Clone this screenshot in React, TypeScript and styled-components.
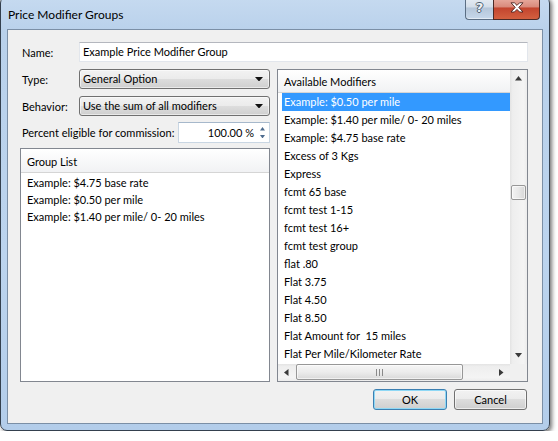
import React from "react";
import styled, { createGlobalStyle } from "styled-components";

const GlobalStyle = createGlobalStyle`
  *, *::before, *::after { box-sizing: border-box; }
  html, body { margin: 0; padding: 0; background: #ffffff; }
  body {
    font-family: "Segoe UI", Lato, "Noto Sans", sans-serif;
    font-size: 11px;
    color: #000;
  }
`;

const availableModifiers = [
  "Example: $0.50 per mile",
  "Example: $1.40 per mile/ 0- 20 miles",
  "Example: $4.75 base rate",
  "Excess of 3 Kgs",
  "Express",
  "fcmt 65 base",
  "fcmt test 1-15",
  "fcmt test 16+",
  "fcmt test group",
  "flat .80",
  "Flat 3.75",
  "Flat 4.50",
  "Flat 8.50",
  "Flat Amount for  15 miles",
  "Flat Per Mile/Kilometer Rate",
];

const groupList = [
  "Example: $4.75 base rate",
  "Example: $0.50 per mile",
  "Example: $1.40 per mile/ 0- 20 miles",
];

const Window = styled.div`
  width: 550px;
  height: 435px;
  margin-top: -4px;
  border: 1px solid #34404e;
  border-radius: 7px;
  background: linear-gradient(180deg, #c6daf0 0%, #b9d1eb 8%, #bcd4ee 60%, #b3cdea 100%);
  box-shadow: 2px 2px 4px rgba(0, 0, 0, 0.55);
  padding: 0 6px 6px 6px;
  display: flex;
  flex-direction: column;
`;

const Caption = styled.div`
  height: 32px;
  display: flex;
  align-items: flex-start;
  justify-content: space-between;
`;

const Title = styled.div`
  padding: 10px 0 0 1px;
  font-size: 12px;
  line-height: 16px;
`;

const CaptionButtons = styled.div`
  display: flex;
  margin-right: 3px;
`;

const HelpButton = styled.div`
  width: 28px;
  height: 23px;
  border: 1px solid #5b6e84;
  border-top: none;
  border-right: none;
  border-radius: 0 0 0 4px;
  background: linear-gradient(180deg, #e8eef5 0%, #d4dee9 45%, #b5c6d9 50%, #c7d8eb 100%);
  box-shadow: inset 0 -1px 0 rgba(255, 255, 255, 0.5);
  display: flex;
  justify-content: center;
  padding-top: 3px;
  font-family: "DejaVu Sans", sans-serif;
  font-weight: bold;
  font-size: 13px;
  line-height: 16px;
  color: #eef2f6;
  text-shadow: -1px 0 #4c5d70, 1px 0 #4c5d70, 0 -1px #4c5d70, 0 1px #4c5d70;
`;

const CloseButton = styled.div`
  width: 47px;
  height: 23px;
  border: 1px solid #4b2a26;
  border-top: none;
  border-radius: 0 0 4px 0;
  background: linear-gradient(180deg, #ebb2a6 0%, #d98a7b 45%, #c3442e 50%, #d3603f 100%);
  display: flex;
  justify-content: center;
  padding-top: 5px;
`;

const Client = styled.div`
  flex: 1;
  border: 1px solid #7b8fa6;
  background: #f0f0f0;
  padding: 12px 14px 0 12px;
  display: flex;
  flex-direction: column;
`;

const FieldRow = styled.div<{ $mb?: number; $h?: number }>`
  display: flex;
  align-items: center;
  height: ${(p) => p.$h ?? 20}px;
  margin-bottom: ${(p) => p.$mb ?? 0}px;
`;

const FieldLabel = styled.div<{ $auto?: boolean }>`
  width: ${(p) => (p.$auto ? "auto" : "59px")};
  padding-left: 2px;
  flex-shrink: 0;
`;

const TextInput = styled.div`
  flex: 1;
  height: 20px;
  background: #fff;
  border: 1px solid #e2e6ec;
  border-top-color: #b4b7be;
  padding-left: 3px;
  line-height: 18px;
`;

const Combo = styled.div`
  flex: 1;
  height: 20px;
  border: 1px solid #707070;
  border-radius: 3px;
  background: linear-gradient(180deg, #f2f2f2 0%, #ebebeb 50%, #dddddd 50%, #cfcfcf 100%);
  box-shadow: inset 0 0 0 1px rgba(255, 255, 255, 0.55);
  display: flex;
  align-items: center;
  justify-content: space-between;
  padding: 0 6px 0 3px;
  line-height: 18px;
`;

const SpinBox = styled.div`
  margin-left: auto;
  width: 92px;
  height: 21px;
  background: #fff;
  border: 1px solid #c9d6e3;
  border-top-color: #a6b8cb;
  display: flex;
  align-items: center;
`;

const SpinValue = styled.div`
  flex: 1;
  text-align: right;
  padding-right: 2px;
`;

const SpinArrows = styled.div`
  width: 13px;
  display: flex;
  flex-direction: column;
  align-items: center;
  gap: 4px;
`;

const MainGrid = styled.div`
  display: grid;
  grid-template-columns: 250px 1fr;
  column-gap: 7px;
  height: 313px;
`;

const LeftColumn = styled.div`
  display: flex;
  flex-direction: column;
`;

const ListFrame = styled.div`
  flex: 1;
  border: 1px solid #828790;
  background: #fff;
  display: flex;
  flex-direction: column;
  overflow: hidden;
`;

const ModifiersFrame = styled.div`
  border: 1px solid #828790;
  background: #fff;
  display: grid;
  grid-template-columns: 1fr 17px;
  grid-template-rows: 1fr 17px;
  overflow: hidden;
`;

const ListHeader = styled.div<{ $h: number; $pt: number }>`
  height: ${(p) => p.$h}px;
  flex-shrink: 0;
  border-bottom: 1px solid #d5d5d5;
  background: linear-gradient(180deg, #ffffff 0%, #f1f2f4 100%);
  padding: ${(p) => p.$pt}px 0 0 6px;
  line-height: 16px;
`;

const ModifierPane = styled.div`
  overflow: hidden;
`;

const ModifierRow = styled.div<{ $selected?: boolean }>`
  height: 18px;
  line-height: 18px;
  margin-left: 4px;
  padding-left: 2px;
  white-space: pre;
  background: ${(p) => (p.$selected ? "#3399ff" : "transparent")};
  color: ${(p) => (p.$selected ? "#ffffff" : "#000000")};
`;

const GroupRows = styled.div`
  padding-top: 1px;
`;

const GroupRow = styled.div`
  height: 17px;
  line-height: 17px;
  padding-left: 6px;
  white-space: pre;
`;

const VScroll = styled.div`
  display: flex;
  flex-direction: column;
  background: linear-gradient(90deg, #e3e3e3 0%, #eeeeee 15%, #f4f4f4 80%, #ececec 100%);
`;

const HScroll = styled.div`
  display: flex;
  background: linear-gradient(180deg, #e3e3e3 0%, #eeeeee 15%, #f4f4f4 80%, #ececec 100%);
`;

const ScrollArrow = styled.div`
  width: 17px;
  height: 17px;
  flex-shrink: 0;
  display: flex;
  align-items: center;
  justify-content: center;
`;

const ScrollTrack = styled.div<{ $vertical?: boolean }>`
  flex: 1;
  display: flex;
  flex-direction: ${(p) => (p.$vertical ? "column" : "row")};
  align-items: ${(p) => (p.$vertical ? "center" : "stretch")};
`;

const VThumb = styled.div<{ $offset: number }>`
  width: 15px;
  height: 15px;
  margin-top: ${(p) => p.$offset}px;
  border: 1px solid #979797;
  border-radius: 2px;
  background: linear-gradient(90deg, #f3f3f3 0%, #e8e8e8 50%, #d6d6d6 100%);
  box-shadow: inset 0 0 0 1px rgba(255, 255, 255, 0.6);
`;

const HThumb = styled.div<{ $offset: number; $size: number }>`
  width: ${(p) => p.$size}px;
  height: 16px;
  margin-left: ${(p) => p.$offset}px;
  border: 1px solid #979797;
  border-radius: 2px;
  background: linear-gradient(180deg, #f5f5f5 0%, #ececec 50%, #d9d9d9 100%);
  box-shadow: inset 0 0 0 1px rgba(255, 255, 255, 0.6);
  display: flex;
  align-items: center;
  justify-content: center;
`;

const ScrollCorner = styled.div`
  background: #f0f0f0;
`;

const ButtonRow = styled.div`
  margin-top: 7px;
  margin-right: 1px;
  display: flex;
  justify-content: flex-end;
  gap: 7px;
`;

const DialogButton = styled.div<{ $default?: boolean; $w: number }>`
  width: ${(p) => p.$w}px;
  height: 21px;
  border: 1px solid ${(p) => (p.$default ? "#3c7fb1" : "#707070")};
  border-radius: 3px;
  background: linear-gradient(180deg, #f2f2f2 0%, #ebebeb 50%, #dddddd 50%, #cfcfcf 100%);
  box-shadow: inset 0 0 0 1px ${(p) => (p.$default ? "#8fd8f5" : "rgba(255, 255, 255, 0.6)")};
  display: flex;
  align-items: center;
  justify-content: center;
  line-height: 16px;
`;

type Dir = "up" | "down" | "left" | "right";

const Triangle: React.FC<{ dir: Dir; size?: number; color?: string }> = ({ dir, size = 7, color = "#3a3a3a" }) => {
  const h = Math.ceil(size / 2) + 0.5;
  const horizontal = dir === "left" || dir === "right";
  const w = horizontal ? h : size;
  const hh = horizontal ? size : h;
  const points = {
    up: `0,${h} ${size / 2},0 ${size},${h}`,
    down: `0,0 ${size},0 ${size / 2},${h}`,
    left: `${h},0 ${h},${size} 0,${size / 2}`,
    right: `0,0 ${h},${size / 2} 0,${size}`,
  }[dir];
  return (
    <svg width={w} height={hh} viewBox={`0 0 ${w} ${hh}`}>
      <polygon points={points} fill={color} />
    </svg>
  );
};

const Grip: React.FC = () => (
  <svg width="8" height="7" viewBox="0 0 8 7">
    <rect x="0" y="0" width="1" height="7" fill="#8a8a8a" />
    <rect x="3" y="0" width="1" height="7" fill="#8a8a8a" />
    <rect x="6" y="0" width="1" height="7" fill="#8a8a8a" />
  </svg>
);

const CloseGlyph: React.FC = () => (
  <svg width="14" height="11" viewBox="0 0 14 11">
    <path
      d="M1 0.8 H4.4 L7 3.4 L9.6 0.8 H13 L8.8 5.4 L13 10 H9.6 L7 7.4 L4.4 10 H1 L5.2 5.4 Z"
      fill="#ffffff"
      stroke="#4a231e"
      strokeWidth="0.9"
      strokeLinejoin="round"
    />
  </svg>
);

const App: React.FC = () => {
  return (
    <>
      <GlobalStyle />
      <Window>
        <Caption>
          <Title>Price Modifier Groups</Title>
          <CaptionButtons>
            <HelpButton>?</HelpButton>
            <CloseButton>
              <CloseGlyph />
            </CloseButton>
          </CaptionButtons>
        </Caption>
        <Client>
          <FieldRow $mb={7}>
            <FieldLabel>Name:</FieldLabel>
            <TextInput>Example Price Modifier Group</TextInput>
          </FieldRow>
          <MainGrid>
            <LeftColumn>
              <FieldRow $mb={7}>
                <FieldLabel>Type:</FieldLabel>
                <Combo>
                  <span>General Option</span>
                  <Triangle dir="down" size={8} color="#111" />
                </Combo>
              </FieldRow>
              <FieldRow $mb={6}>
                <FieldLabel>Behavior:</FieldLabel>
                <Combo>
                  <span>Use the sum of all modifiers</span>
                  <Triangle dir="down" size={8} color="#111" />
                </Combo>
              </FieldRow>
              <FieldRow $mb={5} $h={21}>
                <FieldLabel $auto>Percent eligible for commission:</FieldLabel>
                <SpinBox>
                  <SpinValue>100.00 %</SpinValue>
                  <SpinArrows>
                    <Triangle dir="up" size={5} color="#4e6c8f" />
                    <Triangle dir="down" size={5} color="#4e6c8f" />
                  </SpinArrows>
                </SpinBox>
              </FieldRow>
              <ListFrame>
                <ListHeader $h={24} $pt={5}>Group List</ListHeader>
                <GroupRows>
                  {groupList.map((item) => (
                    <GroupRow key={item}>{item}</GroupRow>
                  ))}
                </GroupRows>
              </ListFrame>
            </LeftColumn>
            <ModifiersFrame>
              <ModifierPane>
                <ListHeader $h={23} $pt={4}>Available Modifiers</ListHeader>
                {availableModifiers.map((item, i) => (
                  <ModifierRow key={item} $selected={i === 0}>
                    {item}
                  </ModifierRow>
                ))}
              </ModifierPane>
              <VScroll>
                <ScrollArrow>
                  <Triangle dir="up" />
                </ScrollArrow>
                <ScrollTrack $vertical>
                  <VThumb $offset={98} />
                </ScrollTrack>
                <ScrollArrow>
                  <Triangle dir="down" />
                </ScrollArrow>
              </VScroll>
              <HScroll>
                <ScrollArrow>
                  <Triangle dir="left" />
                </ScrollArrow>
                <ScrollTrack>
                  <HThumb $offset={1} $size={167}>
                    <Grip />
                  </HThumb>
                </ScrollTrack>
                <ScrollArrow>
                  <Triangle dir="right" />
                </ScrollArrow>
              </HScroll>
              <ScrollCorner />
            </ModifiersFrame>
          </MainGrid>
          <ButtonRow>
            <DialogButton $default $w={74}>OK</DialogButton>
            <DialogButton $w={73}>Cancel</DialogButton>
          </ButtonRow>
        </Client>
      </Window>
    </>
  );
};

export default App;
